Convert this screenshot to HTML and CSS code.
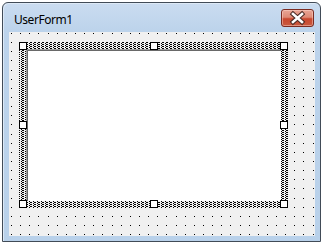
FILE: index.html
```html
<!DOCTYPE html>
<html>
<head>
<meta charset="utf-8">
<title>UserForm1</title>
<link rel="stylesheet" href="styles.css">
</head>
<body>
<div class="window">
  <div class="titlebar">
    <span class="title">UserForm1</span>
    <div class="close-btn">
      <svg class="close-x" width="31" height="16" viewBox="0 0 31 16">
        <path d="M11 4 L20 12 M20 4 L11 12" stroke="#4a2a24" stroke-width="4.6" stroke-linecap="square" fill="none"/>
        <path d="M11 4 L20 12 M20 4 L11 12" stroke="#ffffff" stroke-width="2.6" stroke-linecap="square" fill="none"/>
      </svg>
    </div>
  </div>
  <div class="client">
    <svg class="grid" width="305" height="204" viewBox="0 0 305 204" shape-rendering="crispEdges">
      <path id="dots" fill="#000" d=""/>
    </svg>
    <div class="control">
      <svg class="hatch" width="269" height="166" viewBox="0 0 269 166" shape-rendering="crispEdges">
        <defs>
          <pattern id="checker" width="4" height="2" patternUnits="userSpaceOnUse">
            <rect x="0" y="0" width="4" height="2" fill="#f0f0f0"/>
            <rect x="0" y="0" width="1" height="1" fill="#000"/>
            <rect x="2" y="1" width="1" height="1" fill="#000"/>
            <rect x="3" y="0" width="1" height="1" fill="#000"/>
          </pattern>
        </defs>
        <rect x="0" y="0" width="269" height="166" fill="url(#checker)"/>
      </svg>
      <div class="control-face"></div>
      <span class="handle h-tl"></span>
      <span class="handle h-tm"></span>
      <span class="handle h-tr"></span>
      <span class="handle h-ml"></span>
      <span class="handle h-mr"></span>
      <span class="handle h-bl"></span>
      <span class="handle h-bm"></span>
      <span class="handle h-br"></span>
    </div>
  </div>
</div>
<script src="script.js"></script>
</body>
</html>
```

FILE: styles.css
```css
html, body {
  margin: 0;
  padding: 0;
}
body {
  width: 324px;
  height: 244px;
  background: #ffffff;
  overflow: hidden;
  font-family: "Noto Sans", "Liberation Sans", sans-serif;
}
.window {
  margin: 2px 0 0 2px;
  width: 319px;
  height: 240px;
  box-sizing: border-box;
  border: 1px solid #414b57;
  border-radius: 6px 6px 0 0;
  background: linear-gradient(#cadcf0 0, #bcd3eb 28px, #b9d1ea 100%);
  box-shadow: inset 1px 1px 0 #dde9f6;
  padding: 0 5px 5px 6px;
  display: flex;
  flex-direction: column;
}
.titlebar {
  height: 29px;
  display: flex;
  align-items: flex-start;
  justify-content: space-between;
}
.title {
  margin: 9px 0 0 5px;
  font-size: 12px;
  line-height: 16px;
  letter-spacing: -0.45px;
  color: #000;
}
.close-btn {
  margin: 6px 1px 0 0;
  width: 33px;
  height: 18px;
  box-sizing: border-box;
  border: 1px solid #7a2b21;
  border-radius: 3px;
  background: linear-gradient(#e9a595 0, #de8a76 45%, #c9472e 55%, #c95a3f 100%);
  box-shadow: inset 0 0 0 1px rgba(255, 220, 210, 0.45);
  display: flex;
  align-items: center;
  justify-content: center;
}
.close-x {
  display: block;
}
.client {
  position: relative;
  flex: 1;
  background: #f0f0f0;
}
.grid {
  position: absolute;
  left: 0;
  top: 0;
}
.control {
  position: absolute;
  left: 10px;
  top: 10px;
  width: 269px;
  height: 166px;
  box-sizing: border-box;
  padding: 7px;
}
.hatch {
  position: absolute;
  left: 0;
  top: 0;
}
.control-face {
  position: relative;
  width: 100%;
  height: 100%;
  box-sizing: border-box;
  background: #fff;
  border-top: 1px solid #a0a0a0;
  border-left: 1px solid #a0a0a0;
  box-shadow: inset 1px 1px 0 #696969;
}
.handle {
  position: absolute;
  width: 8px;
  height: 8px;
  box-sizing: border-box;
  border: 1px solid #000;
  background: #fff;
}
.h-tl { left: 0; top: 0; }
.h-tm { left: 131px; top: 0; }
.h-tr { left: 261px; top: 0; }
.h-ml { left: 0; top: 79px; }
.h-mr { left: 261px; top: 79px; }
.h-bl { left: 0; top: 158px; }
.h-bm { left: 131px; top: 158px; }
.h-br { left: 261px; top: 158px; }
```

FILE: script.js
```js
(function () {
  var step = 9.14;
  var d = [];
  for (var j = 0; j < 23; j++) {
    var y = 1 + Math.round(step * j);
    if (y > 203) break;
    for (var i = 0; i < 34; i++) {
      var x = 2 + Math.round(step * i);
      if (x > 304) break;
      d.push("M" + x + " " + y + "h1v1h-1z");
    }
  }
  document.getElementById("dots").setAttribute("d", d.join(""));
})();
```
